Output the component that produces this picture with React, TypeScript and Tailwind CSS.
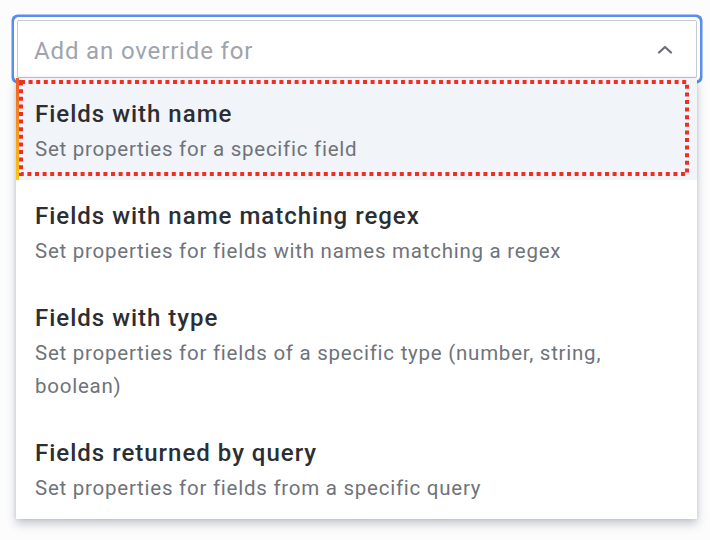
import React from 'react';

interface OverrideOption {
  title: string;
  description: string;
}

const options: OverrideOption[] = [
  { title: 'Fields with name', description: 'Set properties for a specific field' },
  { title: 'Fields with name matching regex', description: 'Set properties for fields with names matching a regex' },
  {
    title: 'Fields with type',
    description: 'Set properties for fields of a specific type (number, string, boolean)',
  },
  { title: 'Fields returned by query', description: 'Set properties for fields from a specific query' },
];

const ChevronUp = () => (
  <svg width="16" height="9" viewBox="0 0 16 9" fill="none">
    <path d="M2 7.5 L8 2 L14 7.5" stroke="#6b6e74" strokeWidth="2.2" strokeLinecap="round" strokeLinejoin="round" />
  </svg>
);

export default function App() {
  return (
    <div
      className="w-[710px] h-[540px] bg-[#fcfcfd] pt-5 pl-[17px]"
      style={{ fontFamily: 'Roboto, "Noto Sans", sans-serif' }}
    >
      <div className="relative w-[680px]">
        {/* select input with focus ring */}
        <div className="h-[58px] flex items-center justify-between bg-white border border-[#c6cad1] rounded-[2px] pl-4 pr-[23px] shadow-[0_0_0_3px_#ffffff,0_0_0_5.5px_#5b8def]">
          <span className="mt-[3px] text-[24px] tracking-[0.85px] text-[#9ea4ae]">Add an override for</span>
          <ChevronUp />
        </div>

        {/* dropdown menu */}
        <div className="absolute top-full left-[-1px] w-[681px] bg-white shadow-[0_5px_9px_rgba(60,70,90,0.28),0_0_3px_rgba(60,70,90,0.15)] z-10">
          {options.map((opt, i) => (
            <div
              key={opt.title}
              className={`relative pl-[19px] pr-6 pt-[19px] pb-[14px] ${i === 0 ? 'bg-[#f1f4f9]' : ''}`}
            >
              {i === 0 && (
                <>
                  <div className="absolute left-0 top-0 bottom-0 w-[3px] bg-gradient-to-b from-[#f05a28] to-[#fbc70f]" />
                  <svg className="absolute left-[3px] top-[2px]" width="670" height="96">
                    <rect
                      x="2"
                      y="2"
                      width="666"
                      height="92"
                      fill="none"
                      stroke="#ee2f23"
                      strokeWidth="4"
                      strokeDasharray="4 3.6"
                    />
                  </svg>
                </>
              )}
              <div className="text-[24px] leading-[34px] tracking-[1px] font-medium text-[#2b2e33]">{opt.title}</div>
              <div className="mt-[2px] text-[20.5px] leading-[33px] tracking-[0.75px] text-[#6f737a] max-w-[610px]">
                {opt.description}
              </div>
            </div>
          ))}
        </div>
      </div>
    </div>
  );
}
